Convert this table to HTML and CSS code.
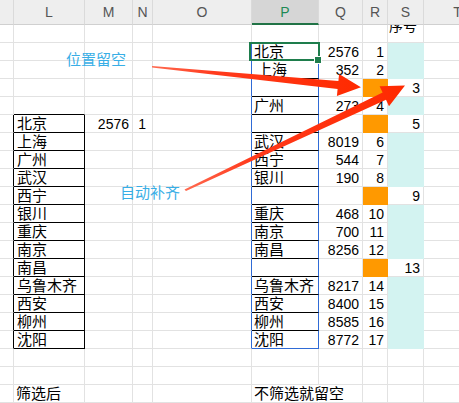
FILE: index.html
```html
<!DOCTYPE html>
<html>
<head>
<meta charset="utf-8">
<link rel="stylesheet" href="styles.css">
</head>
<body>
<div class="sheet">
  <div class="grid">
    <div class="h"></div><div class="h">L</div><div class="h">M</div><div class="h">N</div><div class="h">O</div><div class="h hs">P</div><div class="h">Q</div><div class="h">R</div><div class="h">S</div><div class="h">T</div>

    <div class="c"></div><div class="c"></div><div class="c"></div><div class="c"></div><div class="c"></div><div class="c pt"></div><div class="c"></div><div class="c"></div><div class="c xh"><span>序号</span></div><div class="c"></div>

    <div class="c"></div><div class="c"></div><div class="c"></div><div class="c"></div><div class="c ob"></div><div class="c t pb sel">北京<i class="handle"></i></div><div class="c n">2576</div><div class="c n">1</div><div class="c cy"></div><div class="c"></div>

    <div class="c"></div><div class="c"></div><div class="c"></div><div class="c"></div><div class="c ob"></div><div class="c t pb ind">上海</div><div class="c n">352</div><div class="c n">2</div><div class="c cy"></div><div class="c"></div>

    <div class="c"></div><div class="c"></div><div class="c"></div><div class="c"></div><div class="c ob"></div><div class="c pb"></div><div class="c"></div><div class="c or"></div><div class="c n">3</div><div class="c"></div>

    <div class="c"></div><div class="c lt"></div><div class="c"></div><div class="c"></div><div class="c ob"></div><div class="c t pb">广州</div><div class="c n">273</div><div class="c n">4</div><div class="c cy"></div><div class="c"></div>

    <div class="c kb"></div><div class="c t lb">北京</div><div class="c n">2576</div><div class="c n n1">1</div><div class="c ob"></div><div class="c pb"></div><div class="c"></div><div class="c or"></div><div class="c n">5</div><div class="c"></div>

    <div class="c kb"></div><div class="c t lb">上海</div><div class="c"></div><div class="c"></div><div class="c ob"></div><div class="c t pb">武汉</div><div class="c n">8019</div><div class="c n">6</div><div class="c cy"></div><div class="c"></div>

    <div class="c kb"></div><div class="c t lb">广州</div><div class="c"></div><div class="c"></div><div class="c ob"></div><div class="c t pb">西宁</div><div class="c n">544</div><div class="c n">7</div><div class="c cy"></div><div class="c"></div>

    <div class="c kb"></div><div class="c t lb">武汉</div><div class="c"></div><div class="c"></div><div class="c ob"></div><div class="c t pb">银川</div><div class="c n">190</div><div class="c n">8</div><div class="c cy"></div><div class="c"></div>

    <div class="c kb"></div><div class="c t lb">西宁</div><div class="c"></div><div class="c"></div><div class="c ob"></div><div class="c pb"></div><div class="c"></div><div class="c or"></div><div class="c n">9</div><div class="c"></div>

    <div class="c kb"></div><div class="c t lb">银川</div><div class="c"></div><div class="c"></div><div class="c ob"></div><div class="c t pb">重庆</div><div class="c n">468</div><div class="c n">10</div><div class="c cy"></div><div class="c"></div>

    <div class="c kb"></div><div class="c t lb">重庆</div><div class="c"></div><div class="c"></div><div class="c ob"></div><div class="c t pb">南京</div><div class="c n">700</div><div class="c n">11</div><div class="c cy"></div><div class="c"></div>

    <div class="c kb"></div><div class="c t lb">南京</div><div class="c"></div><div class="c"></div><div class="c ob"></div><div class="c t pb">南昌</div><div class="c n">8256</div><div class="c n">12</div><div class="c cy"></div><div class="c"></div>

    <div class="c kb"></div><div class="c t lb">南昌</div><div class="c"></div><div class="c"></div><div class="c ob"></div><div class="c pb"></div><div class="c"></div><div class="c or"></div><div class="c n">13</div><div class="c"></div>

    <div class="c kb"></div><div class="c t lb">乌鲁木齐</div><div class="c"></div><div class="c"></div><div class="c ob"></div><div class="c t pb">乌鲁木齐</div><div class="c n">8217</div><div class="c n">14</div><div class="c cy"></div><div class="c"></div>

    <div class="c kb"></div><div class="c t lb">西安</div><div class="c"></div><div class="c"></div><div class="c ob"></div><div class="c t pb">西安</div><div class="c n">8400</div><div class="c n">15</div><div class="c cy"></div><div class="c"></div>

    <div class="c kb"></div><div class="c t lb">柳州</div><div class="c"></div><div class="c"></div><div class="c ob"></div><div class="c t pb">柳州</div><div class="c n">8585</div><div class="c n">16</div><div class="c cy"></div><div class="c"></div>

    <div class="c kb"></div><div class="c t lb">沈阳</div><div class="c"></div><div class="c"></div><div class="c ob"></div><div class="c t pb pl">沈阳</div><div class="c n">8772</div><div class="c n">17</div><div class="c cy"></div><div class="c"></div>

    <div class="c"></div><div class="c"></div><div class="c"></div><div class="c"></div><div class="c"></div><div class="c"></div><div class="c"></div><div class="c"></div><div class="c"></div><div class="c"></div>

    <div class="c"></div><div class="c"></div><div class="c"></div><div class="c"></div><div class="c"></div><div class="c"></div><div class="c"></div><div class="c"></div><div class="c"></div><div class="c"></div>

    <div class="c"></div><div class="c t">筛选后</div><div class="c"></div><div class="c"></div><div class="c"></div><div class="c t nr">不筛选就留空</div><div class="c"></div><div class="c"></div><div class="c"></div><div class="c"></div>
  </div>

  <div class="note n-a">位置留空</div>
  <div class="note n-b">自动补齐</div>

  <svg class="arrows" width="459" height="403" viewBox="0 0 459 403">
    <defs>
      <linearGradient id="g1" x1="0" y1="0" x2="1" y2="0">
        <stop offset="0" stop-color="#ff6a50"/>
        <stop offset="0.3" stop-color="#ff3a1c"/>
        <stop offset="1" stop-color="#ff2a00"/>
      </linearGradient>
    </defs>
    <polygon fill="url(#g1)" points="152,66 338.4,81 339.1,74.1 360.9,87.3 336.9,95.9 337.6,89 152,67.6"/>
    <polygon fill="url(#g1)" points="184.5,189.5 382.6,92.6 379.6,86.2 405,85.5 389,106.2 386,99.8 186,191"/>
  </svg>
</div>
</body>
</html>
```

FILE: styles.css
```css
* {
  box-sizing: border-box;
}

body {
  margin: 0;
  background: #ffffff;
}

.sheet {
  position: relative;
  width: 459px;
  height: 403px;
  overflow: hidden;
}

.grid {
  display: grid;
  grid-template-columns: 14px 71px 48px 20px 99px 67px 44px 25px 36px 68px;
  grid-template-rows: 25px;
  grid-auto-rows: 18px;
  width: 492px;
}

.h {
  background: #eeeeee;
  border-right: 1px solid #dadada;
  border-bottom: 1px solid #d0d0d0;
  font-family: "Liberation Sans", Arial, sans-serif;
  font-size: 14px;
  color: #555555;
  text-align: center;
  line-height: 24px;
}

.hs {
  background: #d6d6d6;
  color: #1e8a55;
  border-bottom: 2px solid #217346;
}

.c {
  border-right: 1px solid #e2e2e2;
  border-bottom: 1px solid #e2e2e2;
  overflow: hidden;
  white-space: nowrap;
  font-family: "Liberation Sans", "Noto Sans CJK SC", sans-serif;
  font-size: 14px;
  line-height: 18px;
  color: #000000;
}

.t {
  font-family: "Noto Sans CJK SC", sans-serif;
  font-size: 15px;
  line-height: 16px;
  padding-left: 2px;
}

.ind {
  padding-left: 5px;
}

.n {
  text-align: right;
  padding-right: 3px;
}

.n1 {
  padding-right: 6px;
}

.kb {
  border-right-color: #000000;
}

.lb {
  border-right-color: #000000;
  border-bottom-color: #000000;
  padding-left: 3px;
}

.lt {
  border-bottom-color: #000000;
}

.ob {
  border-right-color: #2f6bd6;
}

.pt {
  border-bottom-color: #000000;
}

.pb {
  border-bottom-color: #000000;
  border-right-color: #2f6bd6;
}

.pl {
  border-bottom-color: #2f6bd6;
}

.cy {
  background: #d3f3f1;
  border-right-color: #d3f3f1;
  border-bottom-color: #d3f3f1;
}

.or {
  background: #ff9900;
  border-right-color: #ff9900;
  border-bottom-color: #ff9900;
}

.nr {
  overflow: visible;
  border-right-color: transparent;
}

.xh span {
  display: block;
  margin-top: -8px;
  padding-left: 1px;
  font-family: "Noto Sans CJK SC", sans-serif;
  font-size: 14px;
  line-height: 16px;
}

.sel {
  position: relative;
  overflow: visible;
  z-index: 1;
}

.sel::after {
  content: "";
  position: absolute;
  top: -1px;
  left: -3px;
  right: -2px;
  bottom: -1px;
  border: 2px solid #1e7d4c;
}

.handle {
  position: absolute;
  right: -3px;
  bottom: -3px;
  width: 6px;
  height: 6px;
  background: #1e7d4c;
  outline: 1px solid #ffffff;
  z-index: 2;
}

.note {
  position: absolute;
  font-family: "Noto Sans CJK SC", sans-serif;
  font-size: 15px;
  line-height: 18px;
  color: #38aee6;
  white-space: nowrap;
  z-index: 3;
}

.n-a {
  left: 66px;
  top: 50px;
}

.n-b {
  left: 120px;
  top: 183px;
}

.arrows {
  position: absolute;
  left: 0;
  top: 0;
  z-index: 4;
  pointer-events: none;
}
```
